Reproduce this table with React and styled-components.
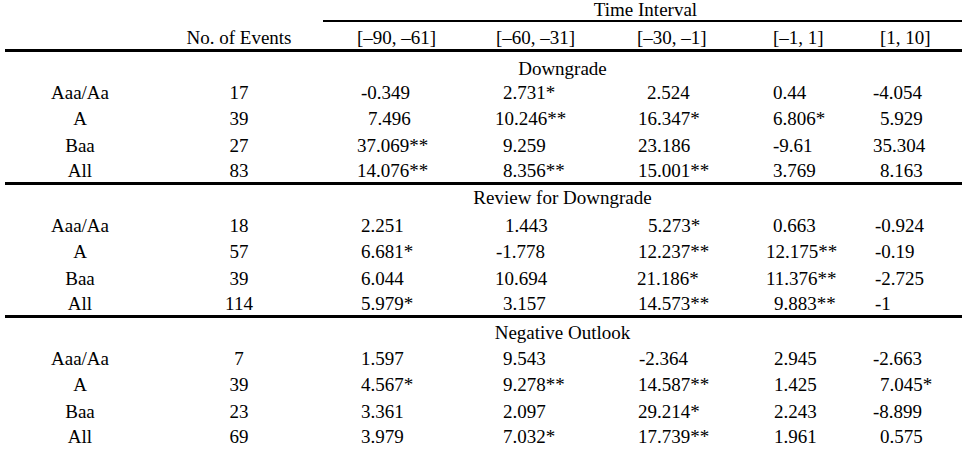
import React from 'react'
import styled, { createGlobalStyle } from 'styled-components';

const GlobalStyle = createGlobalStyle`
  html, body {
    margin: 0;
    padding: 0;
    background: #fff;
  }
  body {
    font-family: "Liberation Serif", "Times New Roman", serif;
    font-size: 19px;
    color: #000;
  }
`;

const COLS = '150px 168px 138px 142px 129px 107px 123px';

const Table = styled.div`
  width: 957px;
  margin-left: 5px;
`;

// every row keeps its own box height; $lift pushes the text down inside it
const Row = styled.div`
  display: grid;
  grid-template-columns: ${COLS};
  box-sizing: border-box;
  height: ${p => p.$h || 26}px;
  padding-top: ${p => p.$lift ?? 2}px;
  line-height: ${p => p.$lh || 26}px;
  white-space: nowrap;
`;

const HeadRow = styled(Row)`
  box-sizing: content-box;
  border-bottom: 3px solid #000;
`;

const Spanner = styled.div`
  grid-column: 3 / -1;
  text-align: center;
  border-bottom: 2px solid #000;
  padding-left: 6px;
`;

const Label = styled.div`
  text-align: center;
`;

const Count = styled.div`
  text-align: center;
`;

const Value = styled.div`
  padding-left: ${p => 34 + (p.$shift || 0)}px;
`;

const SectionTitle = styled.div`
  grid-column: 2 / -1;
  text-align: center;
  padding-left: 8px;
`;

const Section = styled.div`
  border-bottom: ${p => p.$last ? 'none' : '3px solid #000'};
`;

const intervals = [
  ['[–90, –61]', 0],
  ['[–60, –31]', 1],
  ['[–30, –1]', 0],
  ['[–1, 1]', 7],
  ['[1, 10]', 7],
];

const sections = [
  {
    title: 'Downgrade',
    lift: 4,
    rows: [
      ['Aaa/Aa', '17', [['-0.349', 4], ['2.731*', 8], ['2.524', 10], ['0.44', 7], ['-4.054', 0]]],
      ['A', '39', [['7.496', 11], ['10.246**', 0], ['16.347*', 1], ['6.806*', 7], ['5.929', 7]]],
      ['Baa', '27', [['37.069**', 0], ['9.259', 8], ['23.186', 1], ['-9.61', 7], ['35.304', 0]]],
      ['All', '83', [['14.076**', 0], ['8.356**', 8], ['15.001**', 1], ['3.769', 7], ['8.163', 7]]],
    ],
  },
  {
    title: 'Review for Downgrade',
    lift: 0,
    rows: [
      ['Aaa/Aa', '18', [['2.251', 4], ['1.443', 10], ['5.273*', 11], ['0.663', 7], ['-0.924', 2]]],
      ['A', '57', [['6.681*', 4], ['-1.778', 1], ['12.237**', 1], ['12.175**', 0], ['-0.19', 2]]],
      ['Baa', '39', [['6.044', 4], ['10.694', 0], ['21.186*', 0], ['11.376**', 0], ['-2.725', 2]]],
      ['All', '114', [['5.979*', 4], ['3.157', 8], ['14.573**', 1], ['9.883**', 8], ['-1', 2]]],
    ],
  },
  {
    title: 'Negative Outlook',
    lift: 2,
    rows: [
      ['Aaa/Aa', '7', [['1.597', 4], ['9.543', 8], ['-2.364', 2], ['2.945', 8], ['-2.663', 0]]],
      ['A', '39', [['4.567*', 4], ['9.278**', 8], ['14.587**', 1], ['1.425', 8], ['7.045*', 7]]],
      ['Baa', '23', [['3.361', 4], ['2.097', 8], ['29.214*', 1], ['2.243', 8], ['-8.899', 0]]],
      ['All', '69', [['3.979', 4], ['7.032*', 8], ['17.739**', 1], ['1.961', 8], ['0.575', 7]]],
    ],
  },
];

function App() {
  return (
    <>
      <GlobalStyle />
      <Table>
        <Row $h={22} $lift={0} $lh={20}>
          <Spanner>Time Interval</Spanner>
        </Row>
        <HeadRow $h={27} $lift={0} $lh={32}>
          <div />
          <Count>No. of Events</Count>
          {intervals.map(([text, shift]) => (
            <Value key={text} $shift={shift}>{text}</Value>
          ))}
        </HeadRow>
        {sections.map((section, i) => (
          <Section key={section.title} $last={i === sections.length - 1}>
            <Row $lift={section.lift}>
              <SectionTitle>{section.title}</SectionTitle>
            </Row>
            {section.rows.map(([label, count, values], r) => (
              <Row key={label} $lift={r === 2 ? 3 : 2}>
                <Label>{label}</Label>
                <Count>{count}</Count>
                {values.map(([v, shift], j) => (
                  <Value key={j} $shift={shift}>{v}</Value>
                ))}
              </Row>
            ))}
          </Section>
        ))}
      </Table>
    </>
  );
}

export default App;
